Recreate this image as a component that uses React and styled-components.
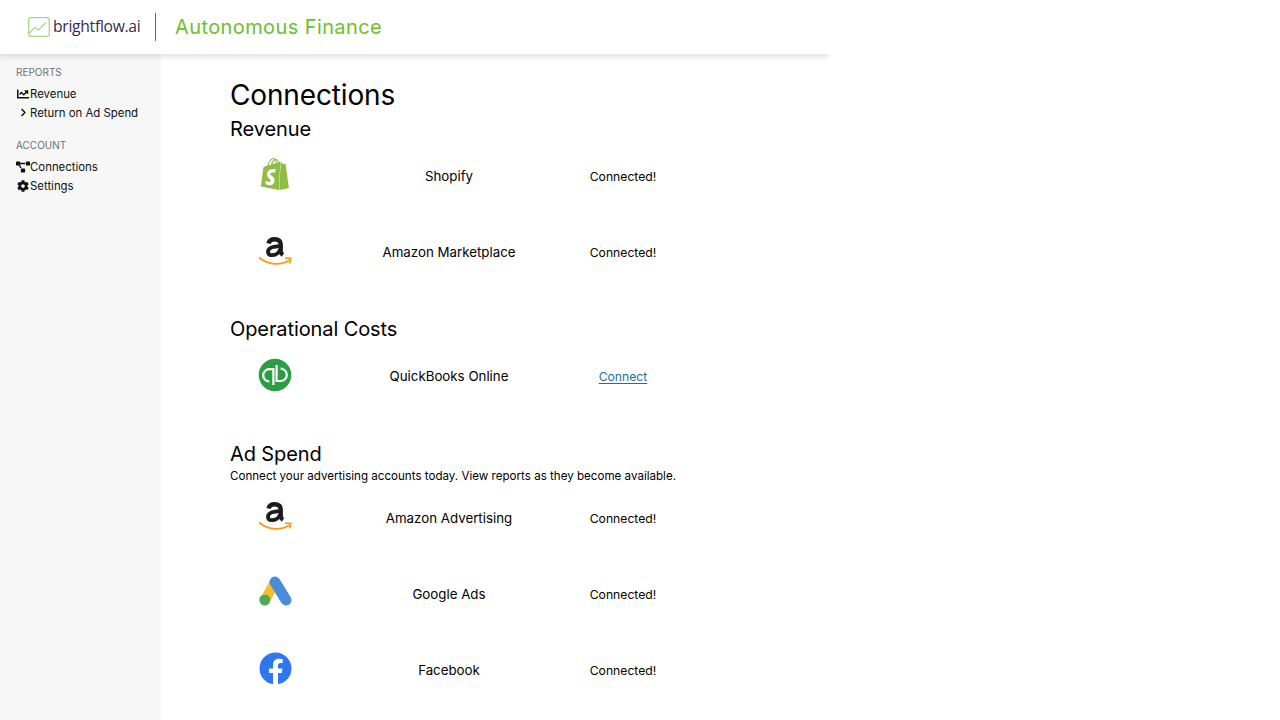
import React from "react";
import styled, { createGlobalStyle } from "styled-components";
import { FaChartLine, FaChevronRight, FaProjectDiagram, FaCog, FaFacebook } from "react-icons/fa";
import { SiShopify } from "react-icons/si";

const GlobalStyle = createGlobalStyle`
  html, body {
    margin: 0;
    padding: 0;
    background: #fff;
    overflow: hidden;
  }
  body {
    font-family: Inter, "Liberation Sans", sans-serif;
    color: #000;
  }
`;

const Frame = styled.div`
  width: 830px;
  height: 720px;
  display: flex;
  flex-direction: column;
  overflow: hidden;
`;

const Header = styled.header`
  position: relative;
  z-index: 1;
  height: 54px;
  flex: none;
  display: flex;
  align-items: center;
  padding-left: 28px;
  background: #fff;
  box-shadow: 0 2px 7px rgba(0, 0, 0, 0.14);
`;

const Logo = styled.div`
  display: flex;
  align-items: center;
  gap: 3px;
  width: 127px;
`;

const LogoText = styled.span`
  position: relative;
  top: -1px;
  font-family: "Open Sans", sans-serif;
  font-size: 15.7px;
  letter-spacing: -0.3px;
  color: #2f2b52;
`;

const Divider = styled.div`
  width: 1px;
  height: 28px;
  background: #666;
`;

const Product = styled.div`
  margin-left: 19px;
  font-size: 20px;
  letter-spacing: 0.4px;
  color: #6cbf2c;
`;

const Body = styled.div`
  flex: 1;
  display: flex;
  min-height: 0;
`;

const Sidebar = styled.nav`
  width: 161px;
  flex: none;
  box-sizing: border-box;
  padding: 10px 0 0 16px;
  background: #f7f7f7;
`;

const NavGroup = styled.div`
  margin-bottom: 15px;
`;

const NavLabel = styled.div`
  font-size: 10px;
  line-height: 16px;
  color: #6f6f6f;
  margin-bottom: 4px;
`;

const NavItem = styled.div`
  display: flex;
  align-items: center;
  height: 19px;
  font-size: 11.4px;
  color: #111;
`;

const NavIcon = styled.span`
  width: 14px;
  flex: none;
  display: flex;
  justify-content: center;
  font-size: ${(p) => p.$size || 12}px;
`;

const Main = styled.main`
  flex: 1;
  padding: 23px 0 0 69px;
`;

const Title = styled.h1`
  margin: 0 0 6px;
  font-size: 28px;
  line-height: 36px;
  font-weight: 400;
  letter-spacing: -0.15px;
`;

const Section = styled.section`
  margin-top: ${(p) => p.$top || 0}px;
`;

const Heading = styled.h2`
  margin: 0;
  font-size: 20px;
  line-height: 20px;
  font-weight: 400;
  letter-spacing: -0.1px;
`;

const Note = styled.p`
  margin: 4px 0 0;
  font-size: 11.6px;
  line-height: 16px;
`;

const Rows = styled.div`
  margin-top: ${(p) => p.$top || 9}px;
  display: flex;
  flex-direction: column;
  gap: 20px;
`;

const Row = styled.div`
  display: grid;
  grid-template-columns: 90px 258px 90px;
  height: 56px;
  align-items: center;
  justify-items: center;
  font-size: 13.3px;
`;

const BrandIcon = styled.div`
  display: flex;
  margin-top: ${(p) => p.$shift || 0}px;
`;

const Status = styled.span`
  font-size: 12.2px;
  white-space: nowrap;
`;

const ConnectLink = styled.a`
  font-size: 12.2px;
  color: #1f6f9c;
  text-decoration: underline;
  text-underline-offset: 2px;
`;

const LogoMark = () => (
  <svg width="22" height="20" viewBox="0 0 22 20" fill="none">
    <rect x="0.7" y="0.7" width="20.6" height="18.6" rx="2" stroke="#a9d884" strokeWidth="1.3" />
    <path d="M1 16.5 L7 10.5 L10.5 13 L18 5.5" stroke="#a9d884" strokeWidth="1.2" />
  </svg>
);

const AmazonLogo = () => (
  <svg width="34" height="29" viewBox="0 0 34 29" fill="none">
    <path d="M10.5 6.5 C11.3 3.5 13.8 2.2 16.5 2.2 C20.5 2.2 22.7 4 22.7 7.5 V14.5 C22.7 16 23.5 16.8 25 17.8" stroke="#1c1c1c" strokeWidth="4.4" />
    <path d="M22 9.2 C15 9.5 10 10.5 10 14.7 C10 17 11.7 18.2 13.8 18.2 C17.5 18.2 21 16 22 12.5" stroke="#1c1c1c" strokeWidth="3.8" />
    <path d="M1 20.5 C10 28 23 29 31.5 23" stroke="#f79c1d" strokeWidth="1.8" />
    <path d="M27 21.3 L32.8 21.2 L31.8 26.5" stroke="#f79c1d" strokeWidth="1.6" />
  </svg>
);

const QuickBooksLogo = () => (
  <svg width="34" height="34" viewBox="0 0 34 34" fill="none">
    <circle cx="17" cy="17" r="16.3" fill="#2a9d45" />
    <path d="M11.4 23.5 A6.2 6.2 0 0 1 11.4 11.1 H15.4 V27" stroke="#fff" strokeWidth="2.2" />
    <path d="M18.6 7 V23 H22.6 A6.2 6.2 0 0 0 22.6 10.6" stroke="#fff" strokeWidth="2.2" />
  </svg>
);

const GoogleAdsLogo = () => (
  <svg width="34" height="32" viewBox="0 0 34 32" fill="none" strokeLinecap="round">
    <path d="M17 7 L7 25" stroke="#f8bd30" strokeWidth="10" />
    <path d="M17 7 L28 25" stroke="#4a8cd8" strokeWidth="11" />
    <circle cx="6.8" cy="25" r="5.5" fill="#4dab55" />
  </svg>
);

const connections = [
  {
    heading: "Revenue",
    top: 0,
    rowsTop: 9,
    items: [
      { name: "Shopify", icon: <SiShopify size={32} color="#8fbc43" />, shift: -4, done: true },
      { name: "Amazon Marketplace", icon: <AmazonLogo />, shift: -2, done: true },
    ],
  },
  {
    heading: "Operational Costs",
    top: 39,
    rowsTop: 9,
    items: [{ name: "QuickBooks Online", icon: <QuickBooksLogo />, shift: -2, done: false }],
  },
  {
    heading: "Ad Spend",
    note: "Connect your advertising accounts today. View reports as they become available.",
    top: 40,
    rowsTop: 6,
    items: [
      { name: "Amazon Advertising", icon: <AmazonLogo />, shift: -4, done: true },
      { name: "Google Ads", icon: <GoogleAdsLogo />, shift: -6, done: true },
      { name: "Facebook", icon: <FaFacebook size={33} color="#2e77ee" />, shift: -4, done: true },
    ],
  },
];

const App = () => {
  return (
    <Frame>
      <GlobalStyle />
      <Header>
        <Logo>
          <LogoMark />
          <LogoText>brightflow.ai</LogoText>
        </Logo>
        <Divider />
        <Product>Autonomous Finance</Product>
      </Header>
      <Body>
        <Sidebar>
          <NavGroup>
            <NavLabel>REPORTS</NavLabel>
            <NavItem>
              <NavIcon><FaChartLine /></NavIcon>Revenue
            </NavItem>
            <NavItem>
              <NavIcon $size={9}><FaChevronRight /></NavIcon>Return on Ad Spend
            </NavItem>
          </NavGroup>
          <NavGroup>
            <NavLabel>ACCOUNT</NavLabel>
            <NavItem>
              <NavIcon $size={14}><FaProjectDiagram /></NavIcon>Connections
            </NavItem>
            <NavItem>
              <NavIcon><FaCog /></NavIcon>Settings
            </NavItem>
          </NavGroup>
        </Sidebar>
        <Main>
          <Title>Connections</Title>
          {connections.map((group) => (
            <Section key={group.heading} $top={group.top}>
              <Heading>{group.heading}</Heading>
              {group.note ? <Note>{group.note}</Note> : null}
              <Rows $top={group.rowsTop}>
                {group.items.map((item) => (
                  <Row key={item.name}>
                    <BrandIcon $shift={item.shift}>{item.icon}</BrandIcon>
                    <span>{item.name}</span>
                    {item.done ? <Status>Connected!</Status> : <ConnectLink href="#">Connect</ConnectLink>}
                  </Row>
                ))}
              </Rows>
            </Section>
          ))}
        </Main>
      </Body>
    </Frame>
  );
};

export default App;
